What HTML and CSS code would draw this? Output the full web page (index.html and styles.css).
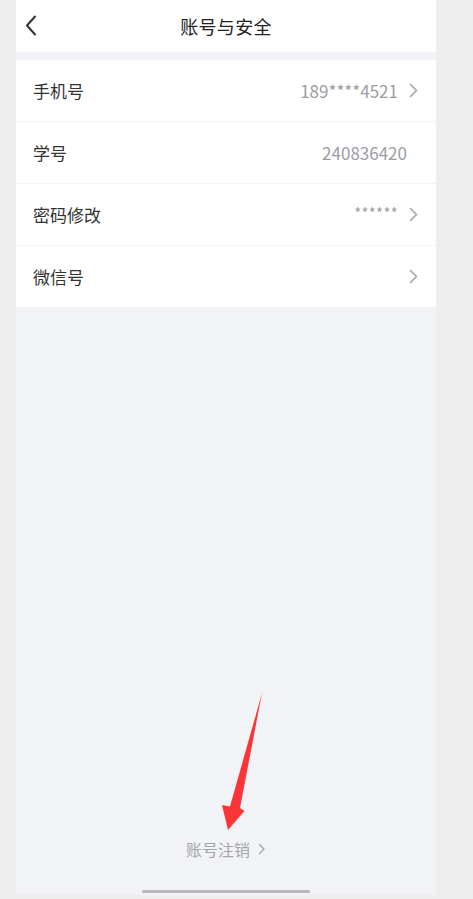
FILE: index.html
```html
<!DOCTYPE html>
<html lang="zh-CN">

<head>
    <meta charset="UTF-8">
    <meta name="viewport" content="width=device-width, initial-scale=1.0">
    <title>账号与安全</title>
    <link rel="stylesheet" href="styles.css">
</head>

<body>

    <div class="phone">

        <!-- Header -->
        <header class="topbar">
            <a class="back" href="#">
                <svg width="12" height="21" viewBox="0 0 12 21">
                    <path d="M10 1.5 L2 10.5 L10 19.5" fill="none" stroke="#333" stroke-width="2" stroke-linecap="round" stroke-linejoin="round" />
                </svg>
            </a>
            <h1>账号与安全</h1>
        </header>

        <!-- Settings list -->
        <ul class="list">
            <li class="row">
                <span class="label">手机号</span>
                <span class="value">189****4521</span>
                <span class="chev"><svg width="9" height="15" viewBox="0 0 9 15"><path d="M1.5 1.5 L7.5 7.5 L1.5 13.5" fill="none" stroke="#a3a5ab" stroke-width="1.6" stroke-linecap="round" stroke-linejoin="round" /></svg></span>
            </li>
            <li class="row no-arrow">
                <span class="label">学号</span>
                <span class="value">240836420</span>
            </li>
            <li class="row">
                <span class="label">密码修改</span>
                <span class="value stars">******</span>
                <span class="chev"><svg width="9" height="15" viewBox="0 0 9 15"><path d="M1.5 1.5 L7.5 7.5 L1.5 13.5" fill="none" stroke="#a3a5ab" stroke-width="1.6" stroke-linecap="round" stroke-linejoin="round" /></svg></span>
            </li>
            <li class="row">
                <span class="label">微信号</span>
                <span class="value"></span>
                <span class="chev"><svg width="9" height="15" viewBox="0 0 9 15"><path d="M1.5 1.5 L7.5 7.5 L1.5 13.5" fill="none" stroke="#a3a5ab" stroke-width="1.6" stroke-linecap="round" stroke-linejoin="round" /></svg></span>
            </li>
        </ul>

        <div class="spacer"></div>

        <!-- Footer link -->
        <a class="cancel" href="#">账号注销
            <svg width="8" height="12" viewBox="0 0 8 12"><path d="M1.5 1.5 L6 6 L1.5 10.5" fill="none" stroke="#a3a5ab" stroke-width="1.4" stroke-linecap="round" stroke-linejoin="round" /></svg>
        </a>

        <div class="home-bar"></div>

        <!-- annotation arrow -->
        <svg class="arrow" width="420" height="895" viewBox="0 0 420 895">
            <polygon points="246,693 224,808 228.5,811 212,830 206,805 214,806.5" fill="#fb3537" />
        </svg>
    </div>

</body>

</html>
```

FILE: styles.css
```css
body,
html {
    margin: 0;
    padding: 0;
    background-color: #eeeeee;
    font-family: "Noto Sans CJK SC", "Noto Sans", sans-serif;
}

.phone {
    position: relative;
    width: 420px;
    height: 895px;
    margin-left: 16px;
    background-color: #f2f3f6;
    display: flex;
    flex-direction: column;
    overflow: hidden;
}

/* Header */
.topbar {
    height: 52px;
    background-color: #ffffff;
    display: flex;
    align-items: center;
    justify-content: center;
    position: relative;
    margin-bottom: 8px;
}

.topbar h1 {
    margin: 0;
    font-size: 18px;
    font-weight: 400;
    color: #222222;
    letter-spacing: 0.3px;
}

.back {
    position: absolute;
    left: 9px;
    top: 15px;
    display: flex;
}

/* List */
.list {
    list-style: none;
    margin: 0;
    padding: 0;
    background-color: #ffffff;
}

.row {
    height: 61px;
    display: flex;
    align-items: center;
    padding: 0 17px;
    border-bottom: 1px solid #f4f4f6;
}

.row:last-child {
    border-bottom: none;
}

.label {
    font-size: 17px;
    color: #333333;
    flex: 1;
}

.value {
    font-size: 17px;
    color: #9b9da4;
}

.value.stars {
    font-size: 15px;
    letter-spacing: 0.3px;
    position: relative;
    top: -2px;
}

.chev {
    display: flex;
    margin-left: 11px;
    margin-right: 1px;
}

.row.no-arrow {
    padding-right: 29px;
}

.spacer {
    flex: 1;
}

/* Footer */
.cancel {
    align-self: center;
    display: flex;
    align-items: center;
    gap: 8px;
    font-size: 16px;
    color: #a3a5ab;
    text-decoration: none;
    margin-bottom: 29px;
}

.home-bar {
    align-self: center;
    width: 168px;
    height: 3px;
    border-radius: 2px;
    background-color: #b6b7bb;
    margin-bottom: 2px;
}

.arrow {
    position: absolute;
    left: 0;
    top: 0;
    pointer-events: none;
}
```
